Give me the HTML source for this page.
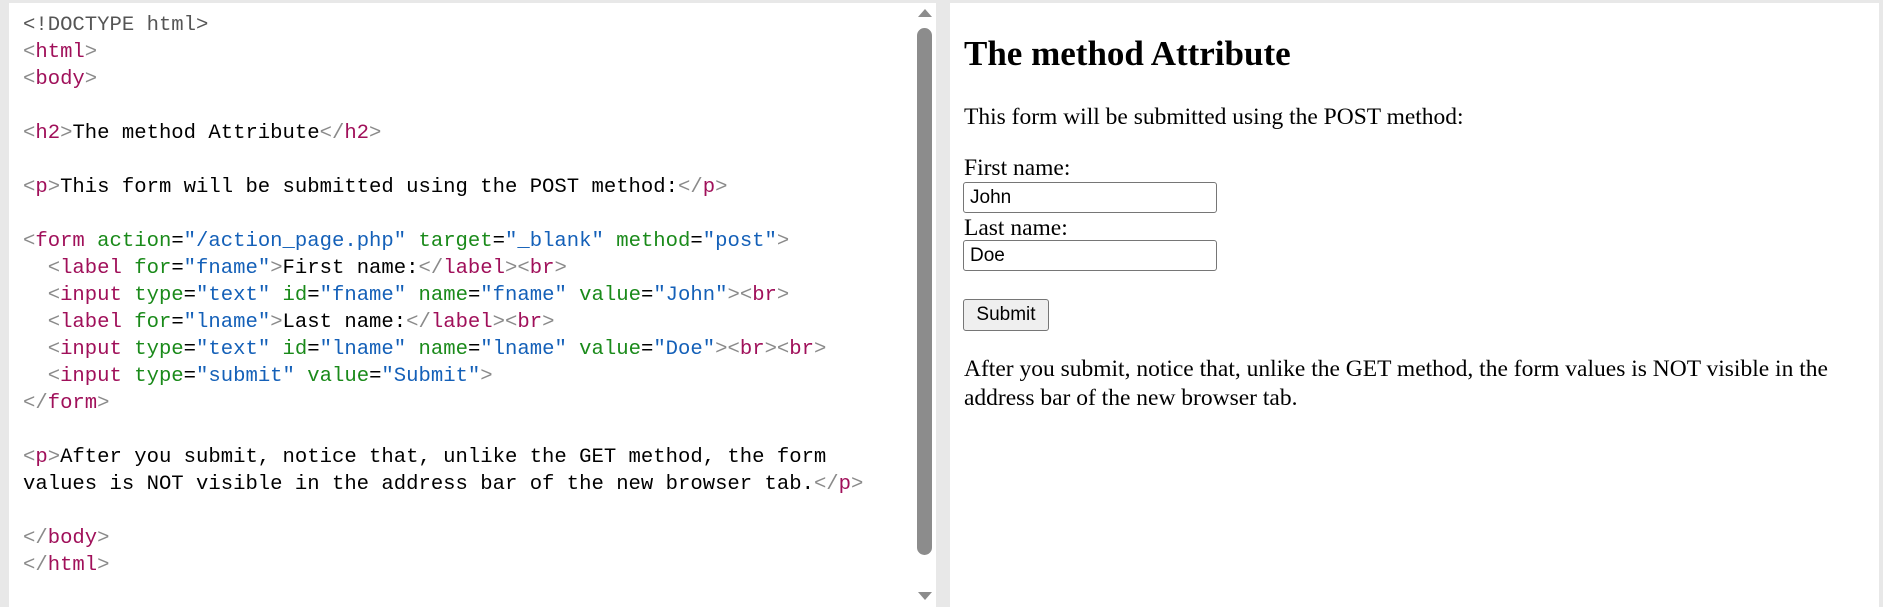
<!DOCTYPE html>
<html><head><style>
html,body{margin:0;padding:0;}
body{width:1883px;height:607px;background:#e8e8e8;position:relative;overflow:hidden;}
#left{position:absolute;left:9px;top:3px;width:927px;height:604px;background:#fff;}
#right{position:absolute;left:950px;top:3px;width:929px;height:604px;background:#fff;}
pre{position:absolute;left:14px;top:0px;margin:0;font-family:"Liberation Mono",monospace;font-size:20.6px;line-height:27px;color:#000;padding-top:8.5px;letter-spacing:0px;}
.b{color:#8a8a8a}.t{color:#a0105a}.a{color:#1a8a1a}.v{color:#1460b8}.d{color:#555}
#thumb{position:absolute;left:917px;top:28px;width:15px;height:527px;background:#8c8c8c;border-radius:8px;}
.up{position:absolute;left:918px;top:9px;width:0;height:0;border-left:7px solid transparent;border-right:7px solid transparent;border-bottom:8px solid #8c8c8c;}
.dn{position:absolute;left:918px;top:592px;width:0;height:0;border-left:7px solid transparent;border-right:7px solid transparent;border-top:8px solid #8c8c8c;}
.s{position:absolute;left:14px;font-family:"Liberation Serif",serif;font-size:23.5px;white-space:nowrap;line-height:26px;}
h2{position:absolute;left:14px;top:31px;margin:0;font-family:"Liberation Serif",serif;font-size:35px;font-weight:bold;line-height:40px;white-space:nowrap;}
.in{position:absolute;left:13px;width:254px;height:31px;border:1px solid #767676;border-radius:3px;font-family:"Liberation Sans",sans-serif;font-size:19px;line-height:29px;box-sizing:border-box;padding-left:6px;}
.btn{position:absolute;left:13px;top:296px;width:86px;height:32px;border:1px solid #767676;border-radius:3px;background:#efefef;font-family:"Liberation Sans",sans-serif;font-size:19px;line-height:30px;text-align:center;box-sizing:border-box;}
</style></head><body>
<div id="left">
<pre><span class="d">&lt;!DOCTYPE html&gt;</span>
<span class="b">&lt;</span><span class="t">html</span><span class="b">&gt;</span>
<span class="b">&lt;</span><span class="t">body</span><span class="b">&gt;</span>

<span class="b">&lt;</span><span class="t">h2</span><span class="b">&gt;</span>The method Attribute<span class="b">&lt;/</span><span class="t">h2</span><span class="b">&gt;</span>

<span class="b">&lt;</span><span class="t">p</span><span class="b">&gt;</span>This form will be submitted using the POST method:<span class="b">&lt;/</span><span class="t">p</span><span class="b">&gt;</span>

<span class="b">&lt;</span><span class="t">form</span> <span class="a">action</span>=<span class="v">"/action_page.php"</span> <span class="a">target</span>=<span class="v">"_blank"</span> <span class="a">method</span>=<span class="v">"post"</span><span class="b">&gt;</span>
  <span class="b">&lt;</span><span class="t">label</span> <span class="a">for</span>=<span class="v">"fname"</span><span class="b">&gt;</span>First name:<span class="b">&lt;/</span><span class="t">label</span><span class="b">&gt;&lt;</span><span class="t">br</span><span class="b">&gt;</span>
  <span class="b">&lt;</span><span class="t">input</span> <span class="a">type</span>=<span class="v">"text"</span> <span class="a">id</span>=<span class="v">"fname"</span> <span class="a">name</span>=<span class="v">"fname"</span> <span class="a">value</span>=<span class="v">"John"</span><span class="b">&gt;&lt;</span><span class="t">br</span><span class="b">&gt;</span>
  <span class="b">&lt;</span><span class="t">label</span> <span class="a">for</span>=<span class="v">"lname"</span><span class="b">&gt;</span>Last name:<span class="b">&lt;/</span><span class="t">label</span><span class="b">&gt;&lt;</span><span class="t">br</span><span class="b">&gt;</span>
  <span class="b">&lt;</span><span class="t">input</span> <span class="a">type</span>=<span class="v">"text"</span> <span class="a">id</span>=<span class="v">"lname"</span> <span class="a">name</span>=<span class="v">"lname"</span> <span class="a">value</span>=<span class="v">"Doe"</span><span class="b">&gt;&lt;</span><span class="t">br</span><span class="b">&gt;&lt;</span><span class="t">br</span><span class="b">&gt;</span>
  <span class="b">&lt;</span><span class="t">input</span> <span class="a">type</span>=<span class="v">"submit"</span> <span class="a">value</span>=<span class="v">"Submit"</span><span class="b">&gt;</span>
<span class="b">&lt;/</span><span class="t">form</span><span class="b">&gt;</span>

<span class="b">&lt;</span><span class="t">p</span><span class="b">&gt;</span>After you submit, notice that, unlike the GET method, the form
values is NOT visible in the address bar of the new browser tab.<span class="b">&lt;/</span><span class="t">p</span><span class="b">&gt;</span>

<span class="b">&lt;/</span><span class="t">body</span><span class="b">&gt;</span>
<span class="b">&lt;/</span><span class="t">html</span><span class="b">&gt;</span></pre>
</div>
<div id="thumb"></div>
<div class="up"></div>
<div class="dn"></div>
<div id="right">
<h2>The method Attribute</h2>
<div class="s" style="top:101px">This form will be submitted using the POST method:</div>
<div class="s" style="top:152px">First name:</div>
<div class="in" style="top:179px">John</div>
<div class="s" style="top:212px">Last name:</div>
<div class="in" style="top:237px">Doe</div>
<div class="btn">Submit</div>
<div class="s" style="top:353px">After you submit, notice that, unlike the GET method, the form values is NOT visible in the</div>
<div class="s" style="top:382px">address bar of the new browser tab.</div>
</div>
</body></html>
